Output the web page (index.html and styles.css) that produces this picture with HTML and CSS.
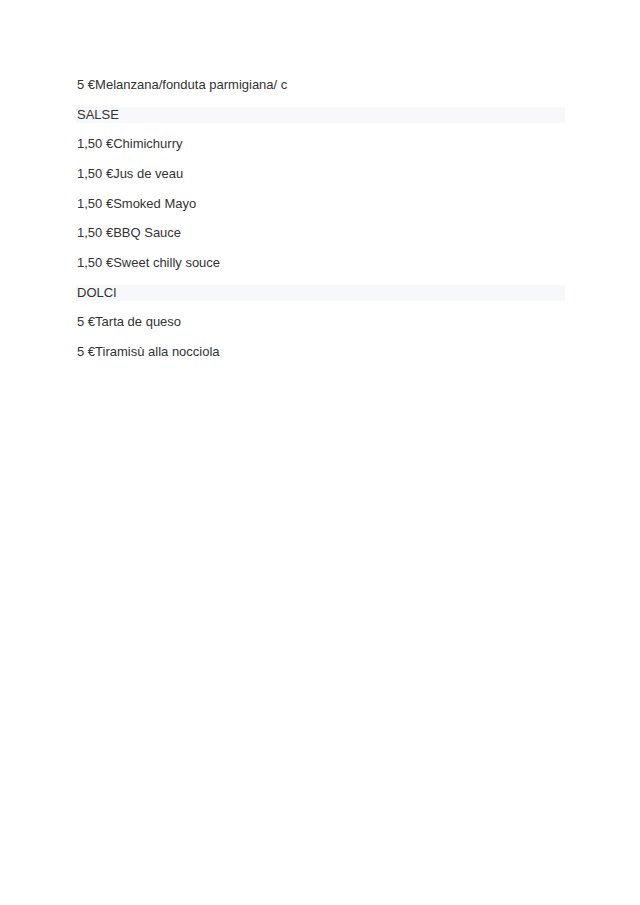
FILE: index.html
```html
<!DOCTYPE html>
<html lang="it">
<head>
  <meta charset="UTF-8" />
  <title>Menu</title>
  <link rel="stylesheet" href="styles.css">
</head>
<body>
  <div class="menu">
    <p class="item">5 €Melanzana/fonduta parmigiana/ c</p>
    <div class="section">SALSE</div>
    <p class="item">1,50 €Chimichurry</p>
    <p class="item">1,50 €Jus de veau</p>
    <p class="item">1,50 €Smoked Mayo</p>
    <p class="item">1,50 €BBQ Sauce</p>
    <p class="item">1,50 €Sweet chilly souce</p>
    <div class="section">DOLCI</div>
    <p class="item">5 €Tarta de queso</p>
    <p class="item">5 €Tiramisù alla nocciola</p>
  </div>
</body>
</html>
```

FILE: styles.css
```css
body {
  margin: 0;
  padding: 0;
  background-color: #ffffff;
  color: #333333;
  font-family: "Liberation Sans", Arial, sans-serif;
}
.menu {
  display: flex;
  flex-direction: column;
  gap: 13.67px;
  width: 489px;
  margin-left: 76px;
  padding-top: 77px;
}
.item, .section {
  margin: 0;
  font-size: 13px;
  line-height: 16px;
  height: 16px;
  padding-left: 1px;
}
.section {
  background-color: #f7f8fc;
}
```
